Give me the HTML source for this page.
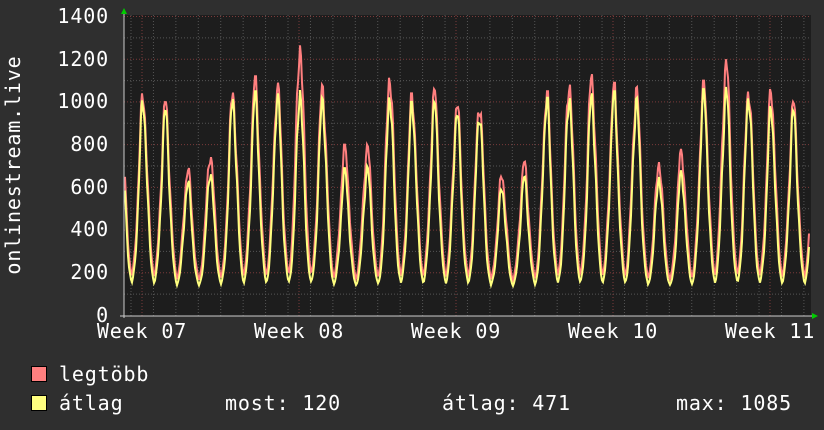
<!DOCTYPE html>
<html><head><meta charset="utf-8"><style>
body{margin:0;background:#2f2f2f;width:824px;height:430px;overflow:hidden;font-family:"DejaVu Sans Mono","Liberation Mono",monospace;}
svg{position:absolute;left:0;top:0}
text{font-family:"DejaVu Sans Mono","Liberation Mono",monospace;fill:#fff;font-size:20px;letter-spacing:0.85px}
</style></head><body>
<svg id="g" width="824" height="430" xmlns="http://www.w3.org/2000/svg">
<rect x="0" y="0" width="824" height="430" fill="#2f2f2f"/>
<rect x="124" y="15" width="687" height="301" fill="#1d1d1d"/>
<g id="grid"></g>
<polyline id="mx" fill="none" stroke="#ff7f7f" stroke-width="2"/>
<polyline id="av" fill="none" stroke="#ffff7f" stroke-width="2"/>
<line x1="124" y1="10" x2="124" y2="318" stroke="#ccc" stroke-width="1"/>
<line x1="120" y1="316" x2="814" y2="316" stroke="#ccc" stroke-width="1"/>
<polygon points="121,14 127,14 124,8" fill="#0c0"/>
<polygon points="812,313 812,319 818,316" fill="#0c0"/>
<g text-anchor="end">
<text x="109" y="23">1400</text><text x="109" y="66">1200</text><text x="109" y="108">1000</text>
<text x="109" y="151">800</text><text x="109" y="194">600</text><text x="109" y="236">400</text>
<text x="109" y="279">200</text><text x="109" y="322">0</text>
</g>
<g text-anchor="middle">
<text x="142" y="338">Week 07</text><text x="299" y="338">Week 08</text><text x="456" y="338">Week 09</text>
<text x="613" y="338">Week 10</text><text x="770" y="338">Week 11</text>
</g>
<text transform="translate(20,165) rotate(-90)" text-anchor="middle">onlinestream.live</text>
<rect x="31.5" y="366.5" width="15" height="15" fill="#ff7f7f" stroke="#000"/>
<rect x="31.5" y="395.5" width="15" height="15" fill="#ffff7f" stroke="#000"/>
<text x="59" y="381">legtöbb</text>
<text x="59" y="410">átlag</text>
<text x="225" y="410">most: 120</text>
<text x="442" y="410">átlag: 471</text>
<text x="676" y="410">max: 1085</text>
</svg>
<script>
var NS="http://www.w3.org/2000/svg",g=document.getElementById('grid');
function ln(x1,y1,x2,y2,c){var l=document.createElementNS(NS,'line');l.setAttribute('x1',x1);l.setAttribute('y1',y1);l.setAttribute('x2',x2);l.setAttribute('y2',y2);l.setAttribute('stroke',c);l.setAttribute('stroke-dasharray','1,2');g.appendChild(l);}
function Y(v){return 315.5-v*299/1400;}
for(var v=100;v<=1400;v+=100){ln(124,Y(v),811,Y(v),v%200?'#555':'#7a3a3a');}
for(var x=131;x<811;x+=22.43){ln(x,15,x,316,'#555');}
for(var i=0;i<5;i++){var x=142+i*157;ln(x,15,x,316,'#7a3a3a');}
var pk=[[1040,1010],[1000,960],[690,630],[760,680],[1050,1020],[1120,1050],[1090,1040],[1270,1060],[1080,1020],[800,690],[800,700],[1130,1040],[1040,1000],[1060,1000],[1000,960],[1000,960],[660,600],[720,650],[1050,1020],[1100,1040],[1130,1040],[1090,1050],[1070,1020],[720,650],[780,680],[1100,1060],[1200,1070],[1070,1040],[1060,980],[1000,960]];
var a=[],b=[];
for(var x=125;x<=809;x+=1){
 var t=(x-143)/22.43,k=Math.round(t);k=Math.max(0,Math.min(pk.length-1,k));
 var d=t-Math.round(t);
 var s=Math.exp(-Math.pow(Math.abs(d)/0.27,1.8));
 var n=(Math.sin(x*1.7)+Math.sin(x*0.77))*0.04;
 var mv=140+(pk[k][0]-140)*Math.min(1,s+n*s);
 var av=125+(pk[k][1]-125)*Math.min(1,Math.pow(s,1.15)+n*s);
 a.push(x+','+Y(mv).toFixed(1));b.push(x+','+Y(av).toFixed(1));
}
document.getElementById('mx').setAttribute('points',a.join(' '));
document.getElementById('av').setAttribute('points',b.join(' '));
</script>
</body></html>
